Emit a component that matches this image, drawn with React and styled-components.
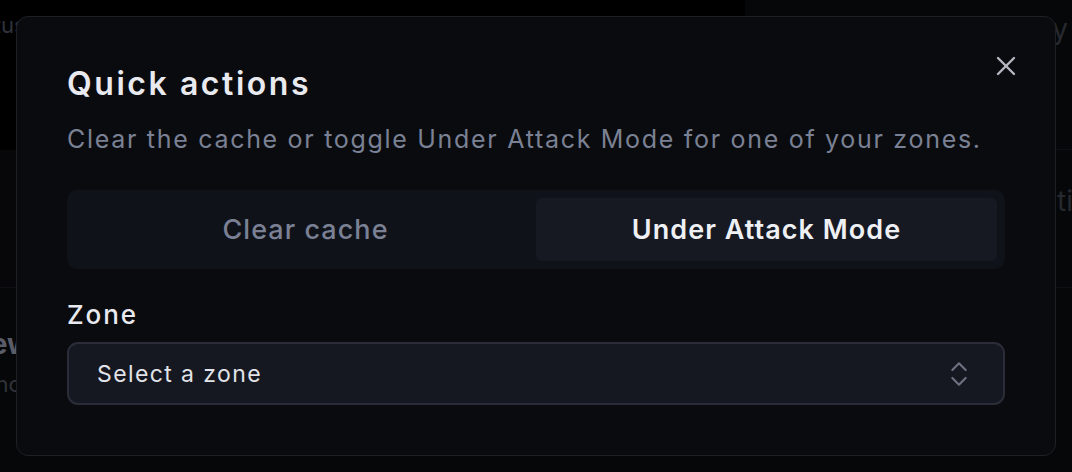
import React, { useState } from "react";
import styled, { createGlobalStyle } from "styled-components";
import { X, ChevronsUpDown } from "lucide-react";

const GlobalStyle = createGlobalStyle`
  html, body {
    margin: 0;
    padding: 0;
    background: #050608;
    font-family: Inter, "Noto Sans", sans-serif;
    overflow: hidden;
  }
`;

// background page, mostly hidden by the dialog
const Page = styled.div`
  display: flex;
  width: 1072px;
  height: 472px;
`;

const LeftCol = styled.div`
  width: 745px;
  flex-shrink: 0;
  display: flex;
  flex-direction: column;
`;

const RightCol = styled.div`
  flex: 1;
  min-width: 0;
  display: flex;
  flex-direction: column;
  background: #0a0b0e;
`;

const Block = styled.div`
  height: ${p => p.h}px;
  background: ${p => p.bg || "transparent"};
  border-bottom: ${p => (p.line ? "1px solid #16181d" : "none")};
  padding: ${p => p.pad || "0"};
  color: ${p => p.color || "#3b3f48"};
  font-size: ${p => p.fs || 22}px;
  font-weight: ${p => p.fw || 400};
  text-align: ${p => p.align || "left"};
  white-space: nowrap;
  overflow: hidden;
  box-sizing: border-box;
`;

const Overlay = styled.div`
  position: fixed;
  inset: 0;
  background: rgba(0, 0, 0, 0.35);
`;

const Dialog = styled.div`
  position: fixed;
  left: 16px;
  top: 16px;
  width: 1040px;
  height: 440px;
  box-sizing: border-box;
  padding: 48px 50px 50px;
  background: #0a0b0f;
  border: 1px solid #1e2027;
  border-radius: 12px;
  display: flex;
  flex-direction: column;
`;

const Close = styled.button`
  position: absolute;
  top: 33px;
  right: 33px;
  background: none;
  border: none;
  padding: 0;
  color: #b4b7c0;
  display: flex;
  cursor: pointer;
`;

const Title = styled.h2`
  margin: 0;
  font-size: 32px;
  line-height: 38px;
  font-weight: 600;
  color: #e9eaef;
  letter-spacing: 2.55px;
`;

const Desc = styled.p`
  margin: 18px 0 0;
  font-size: 25px;
  line-height: 36px;
  color: #7b8194;
  letter-spacing: 1.7px;
`;

const Tabs = styled.div`
  margin-top: 33px;
  height: 80px;
  box-sizing: border-box;
  padding: 8px;
  background: #10121a;
  border-radius: 10px;
  display: grid;
  grid-template-columns: 1fr 1fr;
`;

const Tab = styled.button`
  border: none;
  border-radius: 6px;
  background: ${p => (p.active ? "#161922" : "transparent")};
  color: ${p => (p.active ? "#eef0f4" : "#7b8194")};
  font-family: inherit;
  font-size: 27px;
  font-weight: ${p => (p.active ? 600 : 500)};
  letter-spacing: 1.05px;
  cursor: pointer;
`;

const Label = styled.label`
  margin-top: 28px;
  font-size: 26px;
  line-height: 36px;
  font-weight: 500;
  color: #e9eaef;
  letter-spacing: 1.9px;
`;

const Select = styled.button`
  margin-top: 9px;
  height: 63px;
  box-sizing: border-box;
  padding: 0 28px 0 28px;
  background: #161821;
  border: 2px solid #2a2d37;
  border-radius: 11px;
  display: flex;
  align-items: center;
  justify-content: space-between;
  color: #e1e3e8;
  font-family: inherit;
  font-size: 23px;
  letter-spacing: 1.4px;
  cursor: pointer;
`;

export default function App() {
  const [tab, setTab] = useState("attack");

  return (
    <>
      <GlobalStyle />
      <Page>
        <LeftCol>
          <Block h={150} bg="#000" pad="12px 0 0 0" color="#4a4f5a">
            <span style={{ marginLeft: -40 }}>Status</span>
          </Block>
          <Block h={138} bg="#0b0c0f" line />
          <Block h={184} bg="#0a0b0d" pad="39px 0 0 0" color="#8a90a0" fs={28} fw={700}>
            <div style={{ marginLeft: -100 }}>Overview</div>
            <Block h={40} fs={22} color="#4a4f5a" pad="10px 0 0 0">
              <span style={{ marginLeft: -31 }}>Sync</span>
            </Block>
          </Block>
        </LeftCol>
        <RightCol>
          <Block h={150} line align="right" pad="12px 4px 0 0" fs={28}>
            Traffic by day
          </Block>
          <Block h={138} line pad="34px 0 0 312px" fs={28}>
            time range
          </Block>
          <Block h={184} />
        </RightCol>
      </Page>
      <Overlay />
      <Dialog role="dialog">
        <Title>Quick actions</Title>
        <Desc>Clear the cache or toggle Under Attack Mode for one of your zones.</Desc>
        <Tabs>
          <Tab active={tab === "cache"} onClick={() => setTab("cache")}>Clear cache</Tab>
          <Tab active={tab === "attack"} onClick={() => setTab("attack")}>Under Attack Mode</Tab>
        </Tabs>
        <Label>Zone</Label>
        <Select>
          <span>Select a zone</span>
          <ChevronsUpDown size={32} color="#6c7180" strokeWidth={1.6} />
        </Select>
        <Close aria-label="Close">
          <X size={32} strokeWidth={1.8} />
        </Close>
      </Dialog>
    </>
  );
}
